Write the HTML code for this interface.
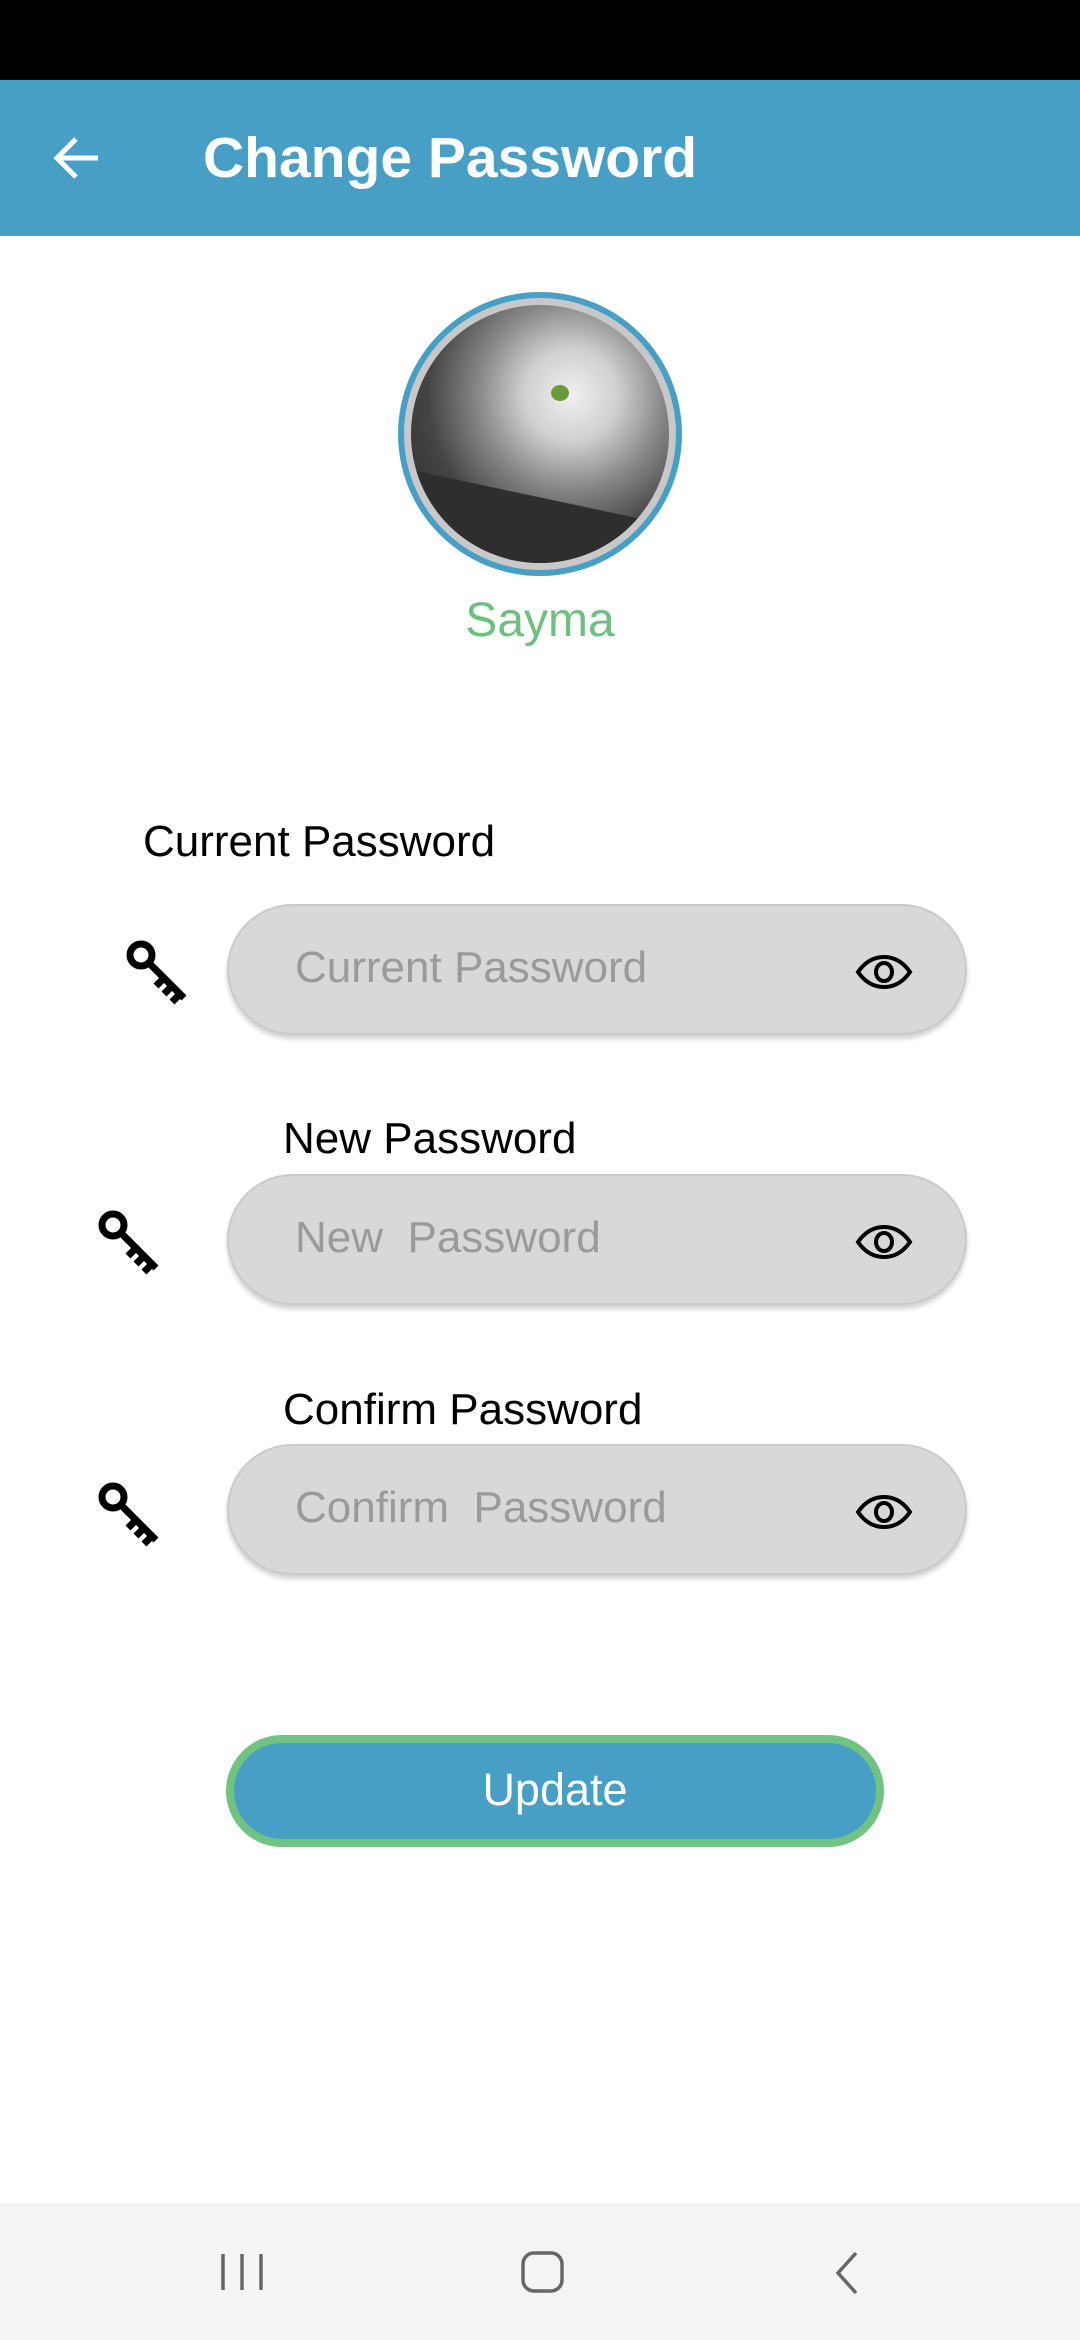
<!DOCTYPE html>
<html><head><meta charset="utf-8"><style>
*{margin:0;padding:0;box-sizing:border-box}
body{width:1080px;height:2340px;background:#fff;position:relative;overflow:hidden;font-family:"Liberation Sans",sans-serif}
.abs{position:absolute}
.lbl{position:absolute;font-size:44px;color:#000;line-height:1}
.field{position:absolute;left:227px;width:740px;height:131px;border-radius:66px;background:#d8d8d8;border:2px solid #cacaca;box-shadow:0 4px 5px rgba(0,0,0,0.18)}
.ph{position:absolute;left:66px;top:40px;font-size:44px;color:#9a9a9a;line-height:1}
.eye{position:absolute;left:626px;top:48px}
</style></head><body>
<div class="abs" style="left:0;top:0;width:1080px;height:80px;background:#000"></div>
<div class="abs" style="left:0;top:80px;width:1080px;height:156px;background:#479fc6"></div>
<svg class="abs" style="left:52px;top:134px" width="50" height="48" viewBox="0 0 50 48"><path d="M46 24H6M24 5L5 24l19 19" stroke="#fff" stroke-width="5" fill="none"/></svg>
<div class="abs" style="left:203px;top:130px;font-size:57px;font-weight:bold;color:#fff;line-height:1">Change Password</div>

<div class="abs" style="left:398px;top:292px;width:284px;height:284px;border-radius:50%;background:#479fc6;padding:6px">
 <div style="width:100%;height:100%;border-radius:50%;background:#c8c8c8;padding:7px">
  <div style="width:100%;height:100%;border-radius:50%;background:radial-gradient(circle at 62% 35%,#f0f0f0 0,#d0d0d0 20%,#888 40%,#444 62%,#222 100%);position:relative;overflow:hidden">
   <div class="abs" style="left:0;top:165px;width:260px;height:110px;background:#2e2e2e;transform:rotate(12deg);transform-origin:0 0"></div>
   <div class="abs" style="left:140px;top:80px;width:18px;height:16px;border-radius:50%;background:#6a9a3a"></div>
  </div>
 </div>
</div>
<div class="abs" style="left:0;width:1080px;top:597px;text-align:center;font-size:48px;color:#6dc07e;line-height:1">Sayma</div>

<div class="lbl" style="left:143px;top:820px">Current Password</div>
<div class="lbl" style="left:283px;top:1117px">New Password</div>
<div class="lbl" style="left:283px;top:1388px">Confirm Password</div>

<svg width="0" height="0" style="position:absolute"><defs>
<g id="key"><circle cx="17" cy="17" r="11" stroke="#000" stroke-width="7" fill="none"/><path d="M25 25L60 60M40 40l-8 8M48 48l-8 8M56 56l-8 8" stroke="#000" stroke-width="7" fill="none"/></g>
</defs></svg>
<svg class="abs" style="left:124px;top:938px" width="68" height="68"><use href="#key"/></svg>
<svg class="abs" style="left:96px;top:1208px" width="68" height="68"><use href="#key"/></svg>
<svg class="abs" style="left:96px;top:1480px" width="68" height="68"><use href="#key"/></svg>

<div class="field" style="top:904px"><div class="ph">Current Password</div>
<svg class="eye" width="58" height="36" viewBox="0 0 58 36"><path d="M3 18C12 5 22 3 29 3s17 2 26 15C46 31 36 33 29 33S12 31 3 18Z" stroke="#000" stroke-width="4" fill="none"/><ellipse cx="29" cy="18" rx="8" ry="9" stroke="#000" stroke-width="4" fill="none"/></svg></div>
<div class="field" style="top:1174px"><div class="ph">New&nbsp; Password</div>
<svg class="eye" width="58" height="36" viewBox="0 0 58 36"><path d="M3 18C12 5 22 3 29 3s17 2 26 15C46 31 36 33 29 33S12 31 3 18Z" stroke="#000" stroke-width="4" fill="none"/><ellipse cx="29" cy="18" rx="8" ry="9" stroke="#000" stroke-width="4" fill="none"/></svg></div>
<div class="field" style="top:1444px"><div class="ph">Confirm&nbsp; Password</div>
<svg class="eye" width="58" height="36" viewBox="0 0 58 36"><path d="M3 18C12 5 22 3 29 3s17 2 26 15C46 31 36 33 29 33S12 31 3 18Z" stroke="#000" stroke-width="4" fill="none"/><ellipse cx="29" cy="18" rx="8" ry="9" stroke="#000" stroke-width="4" fill="none"/></svg></div>

<div class="abs" style="left:226px;top:1735px;width:658px;height:112px;border-radius:56px;background:#479fc6;border:8px solid #70c381;color:#fff;font-size:45px;text-align:center;line-height:94px">Update</div>

<div class="abs" style="left:0;top:2203px;width:1080px;height:137px;background:#f4f4f4"></div>
<svg class="abs" style="left:220px;top:2252px" width="46" height="40"><path d="M3 2v36M22 2v36M41 2v36" stroke="#666" stroke-width="3.5"/></svg>
<svg class="abs" style="left:520px;top:2250px" width="46" height="44"><rect x="3" y="3" width="39" height="38" rx="11" stroke="#666" stroke-width="3.5" fill="none"/></svg>
<svg class="abs" style="left:832px;top:2250px" width="30" height="46"><path d="M24 3L6 23l18 20" stroke="#666" stroke-width="3.5" fill="none"/></svg>
</body></html>
